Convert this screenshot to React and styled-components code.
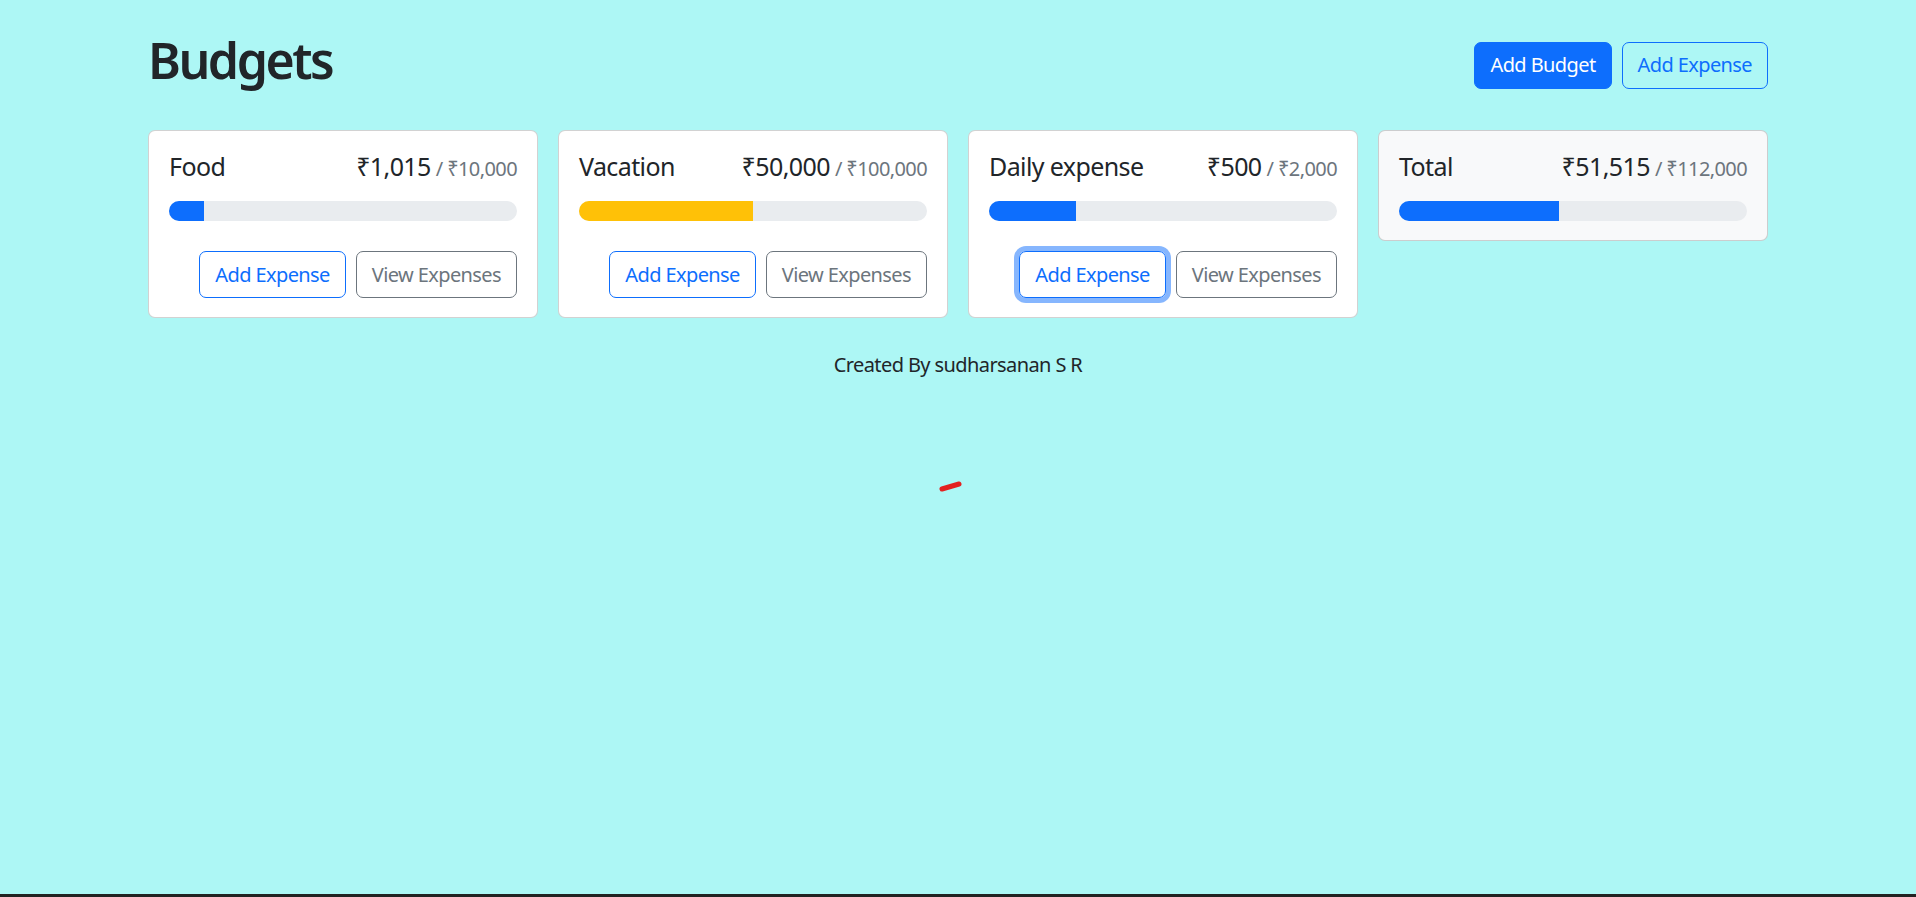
import React from "react";
import styled, { createGlobalStyle, css } from "styled-components";

const GlobalStyle = createGlobalStyle`
  html, body { margin: 0; padding: 0; }
  body {
    background: #adf7f5;
    font-family: "Noto Sans", "Open Sans", "DejaVu Sans", sans-serif;
    color: #212529;
    font-size: 20px;
    line-height: 1.5;
    letter-spacing: -0.03em;
  }
  * { box-sizing: border-box; }
`;

const Page = styled.div`
  position: relative;
  min-height: 100vh;
  border-bottom: 3px solid #222;
`;

const Container = styled.div`
  max-width: 1650px;
  margin: 0 auto;
  padding: 30px 15px;
`;

const Header = styled.div`
  display: flex;
  align-items: center;
  gap: 10px;
  margin-bottom: 30px;
`;

const Title = styled.h1`
  margin: 0 auto 10px 0;
  font-size: 50px;
  font-weight: 600;
  line-height: 1.2;
  letter-spacing: -0.05em;
  color: #212529;
`;

const Button = styled.button`
  font-family: inherit;
  font-size: 20px;
  line-height: 1.5;
  letter-spacing: -0.03em;
  padding: 7.5px 15px;
  border-radius: 7px;
  border: 1.25px solid;
  cursor: pointer;
  ${({ $variant }) =>
    $variant === "primary"
      ? css`background: #0d6efd; border-color: #0d6efd; color: #fff;`
      : $variant === "outline-primary"
      ? css`background: transparent; border-color: #0d6efd; color: #0d6efd;`
      : css`background: transparent; border-color: #6c757d; color: #6c757d;`}
  ${({ $focus }) => $focus && css`box-shadow: 0 0 0 5px rgba(13, 110, 253, 0.5);`}
  ${({ $push }) => $push && css`margin-left: auto;`}
`;

const Grid = styled.div`
  display: grid;
  grid-template-columns: repeat(4, 1fr);
  gap: 20px;
  align-items: start;
`;

const Card = styled.div`
  background: ${({ $light }) => ($light ? "#f8f9fa" : "#fff")};
  border: 1.25px solid rgba(0, 0, 0, 0.175);
  border-radius: 7px;
  padding: 20px 20px 19px;
`;

const CardTitle = styled.div`
  display: flex;
  justify-content: space-between;
  align-items: baseline;
  font-size: 25px;
  line-height: 1.2;
  margin-bottom: 20px;
`;

const Name = styled.div`
  margin-right: 10px;
`;

const Amount = styled.div`
  display: flex;
  align-items: baseline;
`;

const Max = styled.span`
  color: #6c757d;
  font-size: 20px;
  margin-left: 5px;
`;

const Progress = styled.div`
  height: 20px;
  border-radius: 999px;
  background: #e9ecef;
  overflow: hidden;
  display: flex;
`;

const Fill = styled.div`
  height: 100%;
  background: ${({ $color }) => $color};
`;

const Actions = styled.div`
  display: flex;
  align-items: center;
  gap: 10px;
  margin-top: 30px;
`;

const Footer = styled.div`
  text-align: center;
  font-size: 20px;
  margin-top: 32px;
`;

const Mark = styled.svg`
  position: absolute;
  left: 936px;
  top: 479px;
`;

const fmt = (n) => "₹" + n.toLocaleString("en-US");

const budgets = [
  { name: "Food", amount: 1015, max: 10000 },
  { name: "Vacation", amount: 50000, max: 100000 },
  { name: "Daily expense", amount: 500, max: 2000, focus: true },
];

const variantColor = (amount, max) => {
  const r = amount / max;
  if (r < 0.5) return "#0d6efd";
  if (r < 0.75) return "#ffc107";
  return "#dc3545";
};

function BudgetCard({ name, amount, max, light, hideButtons, focus }) {
  return (
    <Card $light={light}>
      <CardTitle>
        <Name>{name}</Name>
        <Amount>
          {fmt(amount)}
          <Max>/ {fmt(max)}</Max>
        </Amount>
      </CardTitle>
      <Progress>
        <Fill
          $color={variantColor(amount, max)}
          style={{ width: `${(amount / max) * 100}%` }}
        />
      </Progress>
      {!hideButtons && (
        <Actions>
          <Button $variant="outline-primary" $push $focus={focus}>
            Add Expense
          </Button>
          <Button $variant="outline-secondary">View Expenses</Button>
        </Actions>
      )}
    </Card>
  );
}

export default function App() {
  const total = budgets.reduce((s, b) => s + b.amount, 0);
  const totalMax = budgets.reduce((s, b) => s + b.max, 0);
  return (
    <Page>
      <GlobalStyle />
      <Container>
        <Header>
          <Title>Budgets</Title>
          <Button $variant="primary">Add Budget</Button>
          <Button $variant="outline-primary">Add Expense</Button>
        </Header>
        <Grid>
          {budgets.map((b) => (
            <BudgetCard key={b.name} {...b} />
          ))}
          <BudgetCard name="Total" amount={total} max={totalMax} light hideButtons />
        </Grid>
        <Footer>Created By sudharsanan S R</Footer>
      </Container>
      <Mark width="30" height="16" viewBox="0 0 30 16">
        <line x1="6" y1="10" x2="23" y2="5" stroke="#e3211f" strokeWidth="5" strokeLinecap="round" />
      </Mark>
    </Page>
  );
}
